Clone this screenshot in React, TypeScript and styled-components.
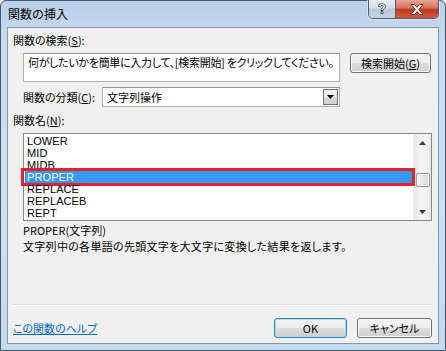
import React from 'react';
import styled, { createGlobalStyle, css } from 'styled-components';

const GlobalStyle = createGlobalStyle`
  html, body {
    margin: 0;
    padding: 0;
    background: #ffffff;
  }
  body {
    font-family: "Noto Sans CJK JP", "Liberation Sans", sans-serif;
    font-size: 11px;
    color: #000000;
  }
`;

const FUNCTIONS = ['LOWER', 'MID', 'MIDB', 'PROPER', 'REPLACE', 'REPLACEB', 'REPT'];
const SELECTED = 'PROPER';

const Window = styled.div`
  width: 446px;
  height: 351px;
  box-sizing: border-box;
  display: flex;
  flex-direction: column;
  border: 1px solid #44576d;
  border-radius: 6px 6px 0 0;
  padding: 0 6px 6px 6px;
  background: linear-gradient(180deg, #b9cfe8 0%, #c8dbef 12%, #cfe0f2 60%, #c4d8ee 100%);
`;

const TitleBar = styled.div`
  height: 26px;
  display: flex;
  align-items: flex-start;
`;

const Title = styled.div`
  flex: 1;
  padding: 6px 0 0 1px;
  font-size: 12px;
  line-height: 14px;
  color: #000000;
`;

const CaptionButtons = styled.div`
  display: flex;
  height: 18px;
  margin-top: -1px;
  border: 1px solid #4c5d72;
  border-top: none;
  border-radius: 0 0 5px 5px;
  overflow: hidden;
  box-shadow: 0 0 0 1px rgba(255, 255, 255, 0.45);
`;

const CaptionButton = styled.div<{ $kind: 'help' | 'close' }>`
  display: flex;
  align-items: center;
  justify-content: center;
  ${({ $kind }) =>
    $kind === 'help'
      ? css`
          width: 26px;
          border-right: 1px solid #4c5d72;
          background: linear-gradient(180deg, #e6edf5 0%, #d3dde9 45%, #b9c7d8 50%, #c6d3e2 100%);
        `
      : css`
          width: 42px;
          background: linear-gradient(180deg, #e8a494 0%, #d7705d 45%, #c2391e 52%, #cf5a3f 100%);
        `}
`;

const Content = styled.div`
  flex: 1;
  display: flex;
  flex-direction: column;
  border: 1px solid #8497ad;
  background: #f0f0f0;
  padding: 5px 6px 5px 5px;
`;

const Label = styled.div<{ $indent?: boolean }>`
  line-height: 14px;
  white-space: nowrap;
  font-feature-settings: 'palt';
  margin-left: ${({ $indent }) => ($indent ? '10px' : '0')};
`;

const Key = styled.span`
  text-decoration: underline;
`;

const SearchRow = styled.div`
  display: flex;
  align-items: flex-start;
  gap: 10px;
  margin: 6px 0 0 10px;
`;

const TextBox = styled.div`
  width: 317px;
  height: 29px;
  box-sizing: border-box;
  border: 1px solid #abadb3;
  border-top-color: #8e9197;
  background: #ffffff;
  padding: 1px 0 0 4px;
  line-height: 14px;
  white-space: nowrap;
  overflow: hidden;
  letter-spacing: -0.3px;
  font-feature-settings: 'palt';
`;

const PushButton = styled.div<{ $width: number; $default?: boolean }>`
  width: ${({ $width }) => $width}px;
  height: 20px;
  box-sizing: border-box;
  display: flex;
  align-items: center;
  justify-content: center;
  border: 1px solid ${({ $default }) => ($default ? '#3c7fb1' : '#707070')};
  border-radius: 3px;
  background: linear-gradient(180deg, #f2f2f2 0%, #ebebeb 49%, #dddddd 50%, #cfcfcf 100%);
  box-shadow: inset 0 0 0 1px ${({ $default }) => ($default ? '#a8dbf6' : '#fbfbfb')};
  font-feature-settings: 'palt';
  line-height: 14px;
  white-space: nowrap;
`;

const CategoryRow = styled.div`
  display: flex;
  align-items: center;
  margin: 5px 0 0 10px;
`;

const CategoryLabel = styled(Label)`
  width: 79px;
`;

const Select = styled.div`
  width: 238px;
  height: 20px;
  box-sizing: border-box;
  display: flex;
  align-items: center;
  border: 1px solid #abadb3;
  border-top-color: #8e9197;
  background: #ffffff;
  padding: 1px 1px 1px 4px;
`;

const SelectValue = styled.div`
  flex: 1;
  line-height: 14px;
  font-feature-settings: 'palt';
`;

const DropButton = styled.div`
  width: 15px;
  height: 16px;
  box-sizing: border-box;
  display: flex;
  align-items: center;
  justify-content: center;
  border: 1px solid #707070;
  background: linear-gradient(180deg, #f2f2f2 0%, #ebebeb 49%, #dddddd 50%, #cfcfcf 100%);
`;

const ListLabel = styled(Label)`
  margin-top: 6px;
`;

const ListBox = styled.div`
  width: 409px;
  height: 88px;
  box-sizing: border-box;
  margin: 6px 0 0 10px;
  display: flex;
  border: 1px solid #828790;
  background: #ffffff;
`;

const Items = styled.div`
  flex: 1;
  padding: 1px 0 0 1px;
`;

const Item = styled.div<{ $selected?: boolean }>`
  position: relative;
  height: 12px;
  line-height: 12px;
  padding-left: 2px;
  margin-right: 1px;
  font-family: "Liberation Sans", "Noto Sans CJK JP", sans-serif;
  font-size: 11px;
  letter-spacing: 0.1px;
  ${({ $selected }) =>
    $selected &&
    css`
      background: #3399ff;
      color: #ffffff;
    `}
`;

const Marker = styled.div`
  position: absolute;
  left: -4px;
  right: -3px;
  top: -3px;
  bottom: -3px;
  border: 3px solid #e8202a;
  pointer-events: none;
`;

const ScrollBar = styled.div`
  width: 17px;
  display: flex;
  flex-direction: column;
  align-items: center;
  background: linear-gradient(90deg, #e6e6e6 0%, #f3f3f3 30%, #f3f3f3 70%, #e9e9e9 100%);
  border-left: 1px solid #ececec;
`;

const ArrowSlot = styled.div`
  height: 17px;
  display: flex;
  align-items: center;
  justify-content: center;
`;

const Track = styled.div`
  flex: 1;
  width: 100%;
  display: flex;
  flex-direction: column;
  align-items: center;
  padding-top: 22px;
`;

const Thumb = styled.div`
  width: 14px;
  height: 14px;
  box-sizing: border-box;
  border: 1px solid #9a9a9a;
  border-radius: 2px;
  background: linear-gradient(90deg, #f3f3f3 0%, #e8e8e8 50%, #d7d7d7 100%);
  box-shadow: inset 0 0 0 1px #fcfcfc;
`;

const Syntax = styled(Label)`
  margin: 2px 0 0 10px;
`;

const Description = styled(Label)`
  margin: 2px 0 0 10px;
  letter-spacing: 0.3px;
`;

const Spacer = styled.div`
  flex: 1;
`;

const Separator = styled.div`
  height: 1px;
  background: #d5dfe5;
  border-bottom: 1px solid #ffffff;
`;

const Footer = styled.div`
  display: flex;
  align-items: center;
  margin-top: 12px;
  height: 20px;
`;

const HelpLink = styled.a`
  flex: 1;
  color: #0066cc;
  text-decoration: underline;
  line-height: 14px;
  font-feature-settings: 'palt';
  cursor: pointer;
`;

const FooterButtons = styled.div`
  display: flex;
  gap: 10px;
`;

const Triangle: React.FC<{ dir: 'up' | 'down'; color?: string }> = ({ dir, color = '#000000' }) => (
  <svg width="7" height="4" viewBox="0 0 7 4">
    <path d={dir === 'up' ? 'M3.5 0 L7 4 L0 4 Z' : 'M0 0 L7 0 L3.5 4 Z'} fill={color} />
  </svg>
);

const HelpGlyph = () => (
  <svg width="10" height="12" viewBox="0 0 10 12">
    <path
      d="M1.5 3.5 C1.5 1.5 3 0.8 5 0.8 C7 0.8 8.5 1.8 8.5 3.4 C8.5 5.2 6 5.6 6 7.6 L4 7.6 C4 5 6.4 4.8 6.4 3.5 C6.4 2.8 5.8 2.5 5 2.5 C4.1 2.5 3.6 2.9 3.6 3.8 Z M4 8.6 L6 8.6 L6 10.6 L4 10.6 Z"
      fill="#ffffff"
      stroke="#2d3a4a"
      strokeWidth="0.8"
    />
  </svg>
);

const CloseGlyph = () => (
  <svg width="14" height="11" viewBox="0 0 14 11">
    <path
      d="M1 0.5 L4.5 0.5 L7 3.4 L9.5 0.5 L13 0.5 L8.8 5.5 L13 10.5 L9.5 10.5 L7 7.6 L4.5 10.5 L1 10.5 L5.2 5.5 Z"
      fill="#ffffff"
      stroke="#5a2015"
      strokeWidth="0.9"
      strokeLinejoin="round"
    />
  </svg>
);

const App: React.FC = () => (
  <>
    <GlobalStyle />
    <Window>
      <TitleBar>
        <Title>関数の挿入</Title>
        <CaptionButtons>
          <CaptionButton $kind="help">
            <HelpGlyph />
          </CaptionButton>
          <CaptionButton $kind="close">
            <CloseGlyph />
          </CaptionButton>
        </CaptionButtons>
      </TitleBar>
      <Content>
        <Label>
          関数の検索(<Key>S</Key>):
        </Label>
        <SearchRow>
          <TextBox>何がしたいかを簡単に入力して、[検索開始] をクリックしてください。</TextBox>
          <PushButton $width={81}>
            検索開始(<Key>G</Key>)
          </PushButton>
        </SearchRow>
        <CategoryRow>
          <CategoryLabel>
            関数の分類(<Key>C</Key>):
          </CategoryLabel>
          <Select>
            <SelectValue>文字列操作</SelectValue>
            <DropButton>
              <Triangle dir="down" />
            </DropButton>
          </Select>
        </CategoryRow>
        <ListLabel>
          関数名(<Key>N</Key>):
        </ListLabel>
        <ListBox>
          <Items>
            {FUNCTIONS.map((name) => (
              <Item key={name} $selected={name === SELECTED}>
                {name}
                {name === SELECTED && <Marker />}
              </Item>
            ))}
          </Items>
          <ScrollBar>
            <ArrowSlot>
              <Triangle dir="up" color="#3a3a3a" />
            </ArrowSlot>
            <Track>
              <Thumb />
            </Track>
            <ArrowSlot>
              <Triangle dir="down" color="#3a3a3a" />
            </ArrowSlot>
          </ScrollBar>
        </ListBox>
        <Syntax>PROPER(文字列)</Syntax>
        <Description>文字列中の各単語の先頭文字を大文字に変換した結果を返します。</Description>
        <Spacer />
        <Separator />
        <Footer>
          <HelpLink>この関数のヘルプ</HelpLink>
          <FooterButtons>
            <PushButton $width={73} $default>
              OK
            </PushButton>
            <PushButton $width={75}>キャンセル</PushButton>
          </FooterButtons>
        </Footer>
      </Content>
    </Window>
  </>
);

export default App;
